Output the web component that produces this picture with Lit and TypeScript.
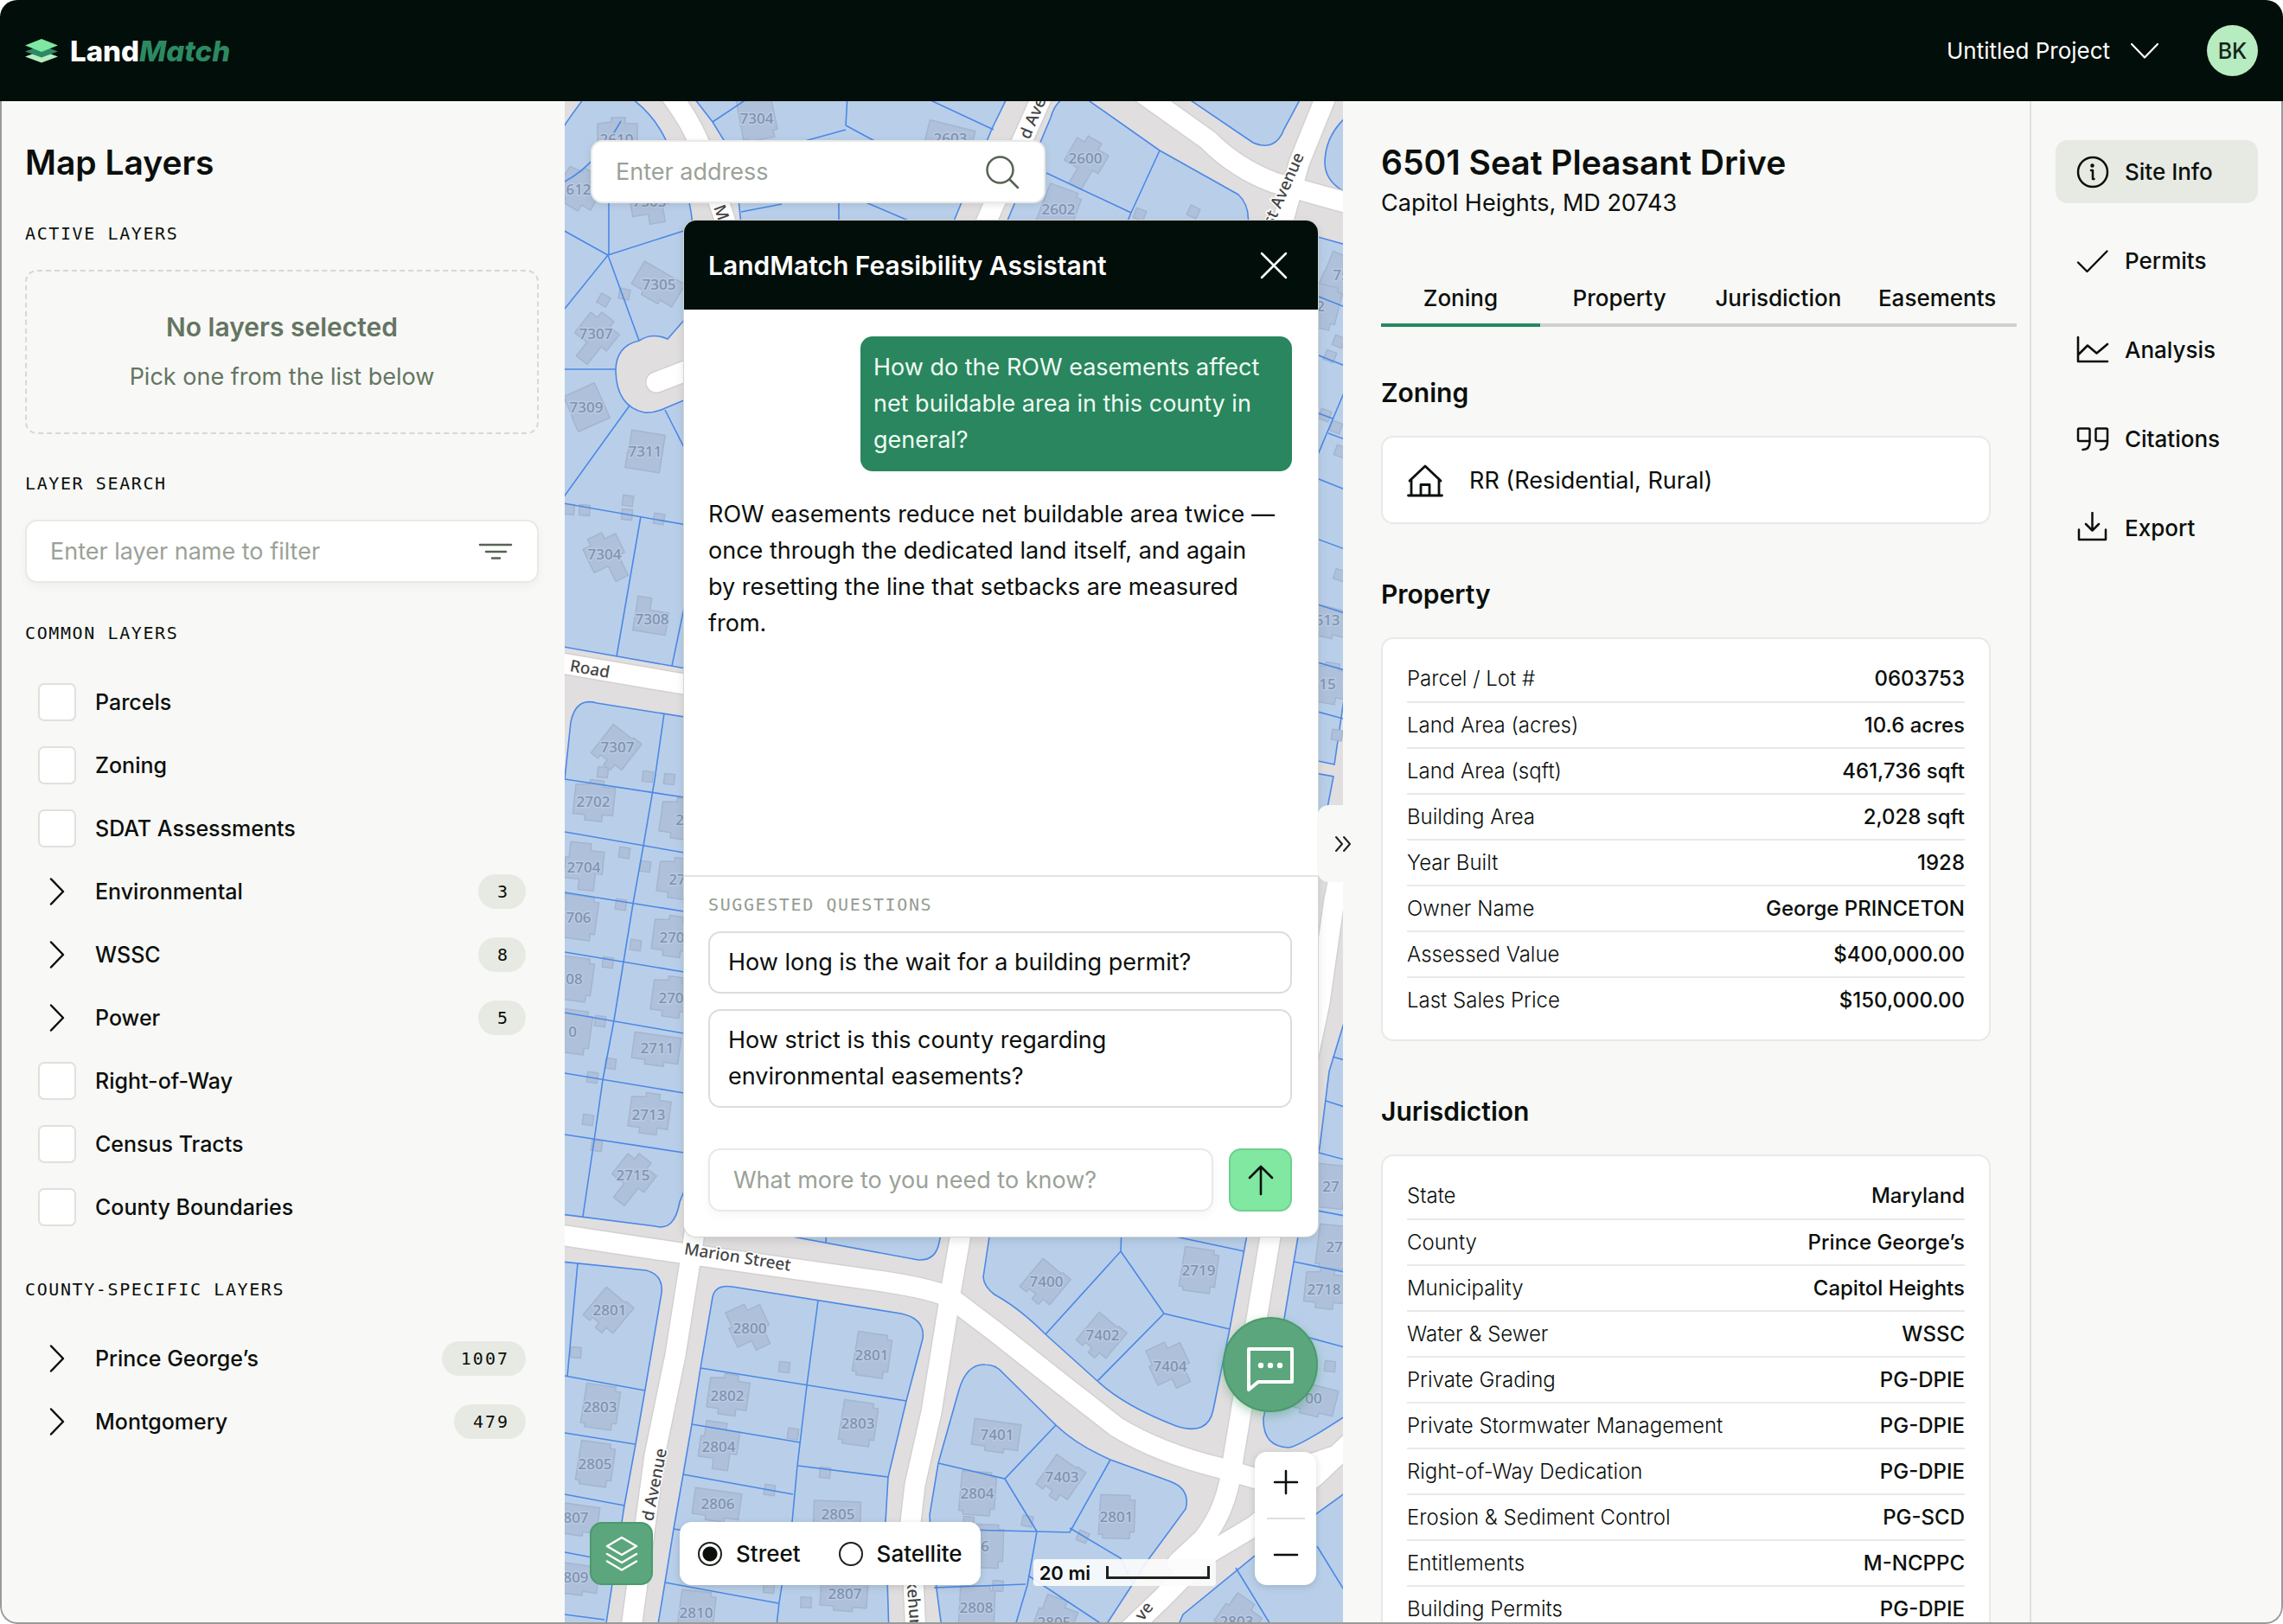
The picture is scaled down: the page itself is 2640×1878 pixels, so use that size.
import { LitElement, html, css, svg } from "lit";
import { customElement, state } from "lit/decorators.js";
import { classMap } from "lit/directives/class-map.js";

/* ---------- icons ---------- */

const icon = (w: number, h: number, body: unknown, sw = 2.5) => html`<svg
  class="icon" width=${w} height=${h} viewBox="0 0 ${w} ${h}" fill="none" stroke="currentColor"
  stroke-width=${sw} stroke-linecap="round" stroke-linejoin="round" aria-hidden="true">${body}</svg>`;

const icons = {
  logo: () => html`<svg width="38" height="28" viewBox="0 0 38 28" aria-hidden="true">
    <path d="M0 20.500 19 13.500l19 7-19 7z" fill="#b7ebc0" />
    <path d="M0 14.500 19 7.500l19 7-19 7z" fill="#2c8a63" />
    <path d="M0 7.500 19 0l19 7.500-19 7.500z" fill="#7fe8a2" />
  </svg>`,
  filter: () => icon(40, 22, svg`<path d="M2 3h36M9 11h23M16 18.500h9" />`, 2.5),
  chevronRight: () => icon(20, 34, svg`<path d="M3 2.500 17 17 3 31.500" />`, 2.5),
  chevronDown: () => icon(34, 20, svg`<path d="M2 2 17 17.500 32 2" />`, 2.2),
  search: () => icon(40, 40, svg`<circle cx="17.500" cy="17.500" r="15" /><path d="M28.500 28.500 38 38" />`, 2.5),
  close: () => icon(32, 32, svg`<path d="M2 2 30 30M30 2 2 30" />`, 2.5),
  arrowUp: () => icon(30, 36, svg`<path d="M15 34V2M2 15 15 2 28 15" />`, 2.6),
  collapse: () => icon(20, 20, svg`<path d="M2 2l7 8-7 8M11 2l7 8-7 8" />`, 2),
  chat: () => html`<svg width="56" height="54" viewBox="0 0 56 54" fill="none" aria-hidden="true">
    <path d="M3 50V3h50v38H14z" stroke="#fff" stroke-width="4" stroke-linejoin="round" />
    <circle cx="17" cy="22" r="3.200" fill="#fff" /><circle cx="28" cy="22" r="3.200" fill="#fff" />
    <circle cx="39" cy="22" r="3.200" fill="#fff" />
  </svg>`,
  layers: () => icon(38, 42, svg`<path d="M19 2 36 12 19 22 2 12zM2 21l17 10 17-10M2 29.500l17 10 17-10" />`, 2.5),
  plus: () => icon(30, 30, svg`<path d="M15 2v26M2 15h26" />`, 2.5),
  minus: () => icon(30, 30, svg`<path d="M2 15h26" />`, 2.5),
  house: () => icon(42, 38, svg`<path d="M1.500 36h39M5 36V17M37 17v19M3 19 21 2l18 17M16 36V23.500h10V36" />`, 2.8),
  info: () => icon(38, 38, svg`<circle cx="19" cy="19" r="17" /><path d="M17 17h2v10h1.500" /><circle cx="18.500" cy="11.500" r="1" fill="currentColor" />`, 2.5),
  check: () => icon(38, 38, svg`<path d="M2 20.500 12.500 31 35.500 7.500" />`, 2.4),
  chart: () => icon(38, 38, svg`<path d="M2 4v28h34M3 23.500l10-10 10.500 9L36 12" />`, 2.6),
  quote: () => icon(38, 38, svg`<path d="M15.500 21H3.500Q2 21 2 19.500V8Q2 6.500 3.500 6.500H14Q15.500 6.500 15.500 8V22Q15.500 31 7.500 31M36 21H24Q22.500 21 22.500 19.500V8Q22.500 6.500 24 6.500H34.500Q36 6.500 36 8V22Q36 31 28 31" />`, 2.5),
  download: () => icon(38, 38, svg`<path d="M18.500 1v20.500M11 14l7.500 7.500L26 14M3 20.500V32H34V20.500" />`, 2.5),
};

/* ---------- data ---------- */

type Layer = { name: string; count?: number };
const commonLayers: Layer[] = [
  { name: "Parcels" },
  { name: "Zoning" },
  { name: "SDAT Assessments" },
  { name: "Environmental", count: 3 },
  { name: "WSSC", count: 8 },
  { name: "Power", count: 5 },
  { name: "Right-of-Way" },
  { name: "Census Tracts" },
  { name: "County Boundaries" },
];
const countyLayers: Layer[] = [
  { name: "Prince George’s", count: 1007 },
  { name: "Montgomery", count: 479 },
];

const propertyRows = [
  ["Parcel / Lot #", "0603753"],
  ["Land Area (acres)", "10.6 acres"],
  ["Land Area (sqft)", "461,736 sqft"],
  ["Building Area", "2,028 sqft"],
  ["Year Built", "1928"],
  ["Owner Name", "George PRINCETON"],
  ["Assessed Value", "$400,000.00"],
  ["Last Sales Price", "$150,000.00"],
];
const jurisdictionRows = [
  ["State", "Maryland"],
  ["County", "Prince George’s"],
  ["Municipality", "Capitol Heights"],
  ["Water & Sewer", "WSSC"],
  ["Private Grading", "PG-DPIE"],
  ["Private Stormwater Management", "PG-DPIE"],
  ["Right-of-Way Dedication", "PG-DPIE"],
  ["Erosion & Sediment Control", "PG-SCD"],
  ["Entitlements", "M-NCPPC"],
  ["Building Permits", "PG-DPIE"],
];

const navItems = [
  { name: "Site Info", icon: icons.info },
  { name: "Permits", icon: icons.check },
  { name: "Analysis", icon: icons.chart },
  { name: "Citations", icon: icons.quote },
  { name: "Export", icon: icons.download },
];

/* ---------- map geometry ---------- */

const blocks = [
  "M640 165 Q655 140 678 110 H725 Q755 130 770 162 Q798 216 801 262 L800 267 V360 L772 392 Q754 384 739 394 Q712 400 712 429 Q713 470 745 477 Q757 478 769 472 L810 455 V776 L640 746Z",
  "M800 110 L824 141 L837 162 Q852 200 855 240 L858 270 H1097 L1112 234 L1147 149 L1166 110Z",
  "M1215 136 Q1220 117 1236 110 H1250 L1341 174 L1432 225 Q1446 238 1443 262 H1162Z",
  "M1368 110 L1449 165 Q1475 176 1485 149 L1506 110Z",
  "M1570 125 Q1532 150 1532 189 Q1533 216 1570 228Z",
  "M1510 270 L1570 287 V700 L1543 884 L1510 877Z",
  "M1510 892 L1542 898 L1530 960 H1510Z",
  "M653 901 L660 835 Q666 806 690 813 L810 832 V1330 L786 1390 Q780 1424 758 1418 L640 1403 V901Z",
  "M640 1458 L747 1469 Q767 1474 765 1495 L746 1607 L735 1670 L722 1741 L699 1890 H640Z",
  "M824 1500 Q827 1485 847 1488 L1042 1519 Q1070 1525 1067 1548 L1048 1620 L1027 1708 L1024 1760 L1028 1890 H759 L769 1830 L779 1768 L790 1705 L800 1647 L810 1582Z",
  "M870 1417 L916 1430 L1062 1457 Q1082 1458 1086 1437 L1090 1417Z",
  "M1146 1417 L1137 1477 Q1138 1488 1150 1497 Q1178 1512 1209 1543 L1269 1597 Q1300 1626 1360 1649 Q1397 1661 1403 1630 L1422 1537 L1444 1417Z",
  "M1109 1607 Q1118 1577 1139 1578 Q1152 1578 1160 1588 L1221 1648 Q1245 1671 1284 1688 L1353 1713 Q1377 1722 1371 1745 L1329 1802 L1309 1833 L1272 1890 H1090 L1078 1800 L1075 1752 L1085 1692Z",
  "M1570 1130 L1537 1239 L1526 1327 L1501 1430 L1485 1525 L1461 1640 Q1460 1673 1490 1674 Q1503 1673 1570 1628Z",
  "M1570 1716 L1523 1750 L1450 1800 L1368 1867 L1358 1890 H1570Z",
];

const lots = [
  "M653 357 703 295 739 394M703 295 800 264M640 260 703 295M704 225V295M640 427H712M728 469 648 580M769 474 800 535M640 580 800 608M741 597 713 759M800 660 777 770M653 210Q690 190 718 140",
  "M824 141 863 115M980 110 978 145M978 150 927 164M978 145 1015 165M1074 115 1149 150M970 230V256M857 245 904 236M1001 234 1055 257",
  "M1210 200 1308 246 1303 258M1341 174 1308 246",
  "M1520 341 1555 355M1520 409 1555 423M1520 476 1541 484M1523 528 1555 452M1536 501 1555 508M1520 552 1555 566M1520 622 1555 635M1520 698 1555 709M1520 765 1555 775M1520 822 1553 831",
  "M768 825 757 902 744 978 732 1045 710 1180 697 1249 687 1319 674 1407M653 901 791 922M653 962 791 986M653 1032 791 1054M653 1101 791 1124M653 1171 791 1195M653 1241 791 1264M653 1312 791 1333",
  "M668 1461 656 1592M653 1591 746 1608M653 1657 734 1670M653 1728 722 1741M653 1795 711 1806M653 1867 699 1873",
  "M946 1504 933 1602 922 1695 916 1760 901 1853 898 1880M810 1582 1048 1620M800 1647 925 1668M923 1695 1027 1708M790 1705 917 1728M779 1768 910 1790M769 1830 900 1854",
  "M956 1420 955 1437",
  "M1297 1420 1296 1447 1209 1543M1296 1447 1346 1519 1422 1537M1346 1519 1269 1597M1345 1427 1439 1447",
  "M1085 1692 1162 1710 1221 1648M1162 1710 1199 1771 1188 1833 1174 1880M1076 1768 1237 1772 1284 1688M1237 1767 1296 1802 1310 1832M1080 1836 1186 1832M1189 1822 1277 1880",
  "M1541 1222 1555 1226M1533 1273 1555 1280M1525 1333 1555 1341M1508 1397 1555 1406M1496 1459 1555 1471M1485 1539 1555 1558",
  "M1429 1813 1470 1880M1523 1788 1555 1840",
];

const roads = [
  "M620 762 820 796",
  "M830 415 759 442",
  "M768 100Q800 140 812 175L840 260",
  "M1210 100 1138 262",
  "M1310 100 1397 162Q1430 195 1473 211L1570 238",
  "M1538 100 1502 189 1482 262",
  "M1560 960 1543 1040 1526 1159 1469 1430 1426 1687Q1420 1745 1391 1780L1362 1807",
  "M620 1424 794 1450 1022 1482Q1075 1490 1098 1500L1151 1540 1227 1600 1291 1650Q1340 1680 1409 1697L1460 1712 1570 1675",
  "M805 1410 801 1440 781 1567 757 1683 729 1890",
  "M1114 1410 1100 1490 1077 1633 1058 1717 1053 1760 1059 1890",
  "M1570 1660 1523 1705 1450 1765 1391 1800 1344 1848 1300 1890",
];

type House = [label: string, x: number, y: number, turn: number, shape: number];
const footprints = [
  "M-19-25H15V-20H21V17H16V25H-15V21H-20Z",
  "M-22-18-6-20V-25H10V-18H24V14H12V22H-8V16H-22Z",
  "M-18-28H6V-20H22V6H14V26H-4V14H-22V-10H-18Z",
  "M-28-15H26V15H10V20H-12V15H-28Z",
  "M-19-22H20V22H-20V4H-19Z",
  "M-20-16H-10V-24H8V-16H22V8H14V34H-2V14H-20Z",
  "M-20-24H-4V-10H18V16H-20Z",
  "M-20-18H8V-20H20V18H10V26H0V19H-10V24H-20Z",
];
const houses: House[] = [
  ["7304", 875, 137, -12, 0], ["2610", 713, 161, 0, 1], ["2603", 1099, 160, 14, 3], ["612", 669, 219, 30, 1],
  ["7303", 751, 233, -10, 2], ["2600", 1255, 183, 30, 5], ["2602", 1224, 242, 20, 0], ["7305", 762, 329, 30, 3],
  ["7307", 689, 386, 38, 5], ["7309", 678, 471, -24, 4], ["7311", 746, 522, 9, 4], ["7304", 699, 641, -26, 5],
  ["7308", 754, 716, 9, 6], ["75", 1551, 318, 22, 4], ["2", 1527, 354, 14, 0], ["613", 1535, 717, 14, 3], ["15", 1535, 791, 10, 1],
  ["7307", 714, 864, 38, 7], ["2702", 686, 927, 6, 1], ["2704", 675, 1003, 6, 2], ["706", 669, 1061, 8, 0],
  ["08", 664, 1132, 8, 0], ["0", 662, 1193, 8, 0], ["2711", 760, 1212, 8, 3], ["2713", 750, 1289, 8, 1],
  ["2715", 732, 1359, 38, 5], ["2", 786, 948, 8, 1], ["27", 783, 1017, 8, 1], ["270", 777, 1084, 8, 1], ["270", 776, 1154, 8, 1],
  ["2801", 705, 1515, 40, 7], ["2800", 867, 1536, -25, 2], ["2801", 1008, 1567, 8, 0], ["2802", 841, 1614, 8, 1],
  ["2803", 992, 1646, 8, 0], ["2804", 831, 1673, 8, 2], ["2806", 830, 1739, 8, 3], ["2805", 969, 1751, 2, 3],
  ["2807", 977, 1843, 4, 3], ["2810", 805, 1865, 6, 0], ["2803", 694, 1627, 8, 0], ["2805", 688, 1693, 8, 0],
  ["807", 666, 1755, 8, 3], ["809", 666, 1824, 8, 3], ["7400", 1210, 1482, 40, 7], ["2719", 1386, 1469, 8, 0],
  ["7402", 1275, 1544, 40, 7], ["7404", 1353, 1580, -25, 2], ["7401", 1153, 1659, 8, 3], ["7403", 1228, 1708, 35, 7],
  ["2804", 1130, 1727, 4, 0], ["2801", 1291, 1754, 2, 0], ["6", 1139, 1788, 2, 0], ["2808", 1129, 1859, 2, 0],
  ["2805", 1219, 1876, 20, 2], ["2803", 1430, 1875, 35, 2], ["2718", 1531, 1491, 6, 1], ["27", 1543, 1442, 6, 0],
  ["27", 1539, 1372, 6, 0], ["00", 1519, 1617, 14, 3],
];
const sheds = [
  [722, 340, 12], [698, 347, 30], [726, 579, 8], [725, 595, 4], [658, 589, 6], [676, 590, 4], [762, 600, 8], [966, 173, 20],
  [1380, 245, 25], [1318, 248, 20], [1548, 395, 22], [1538, 412, 22], [1549, 665, 18],
  [697, 893, 6], [749, 898, 6], [774, 901, 6], [722, 986, 8], [746, 1002, 8], [718, 1046, 8], [735, 1093, 8], [703, 1113, 8],
  [694, 1181, 8], [706, 1230, 8], [685, 1246, 8], [680, 1295, 8], [690, 1325, 8], [666, 1564, 4], [907, 1581, 6], [917, 1658, 8],
  [890, 1723, 8], [954, 1703, 6], [1120, 1760, 4], [1188, 1759, 10], [1252, 1777, 22], [889, 1836, 4], [932, 1853, 2], [1154, 1834, 4],
  [1538, 1580, 6], [1532, 480, 20], [1545, 494, 20], [1550, 522, 20], [1546, 850, 8],
];

const streetNames: [string, number, number, number][] = [
  ["Road", 681, 780, 10],
  ["Marion Street", 852, 1460, 9],
  ["d Avenue", 763, 1718, -79],
  ["d Ave", 1200, 139, -67],
  ["st Avenue", 1490, 221, -66],
  ["kehurst", 1051, 1862, 86],
  ["M", 828, 248, 70],
  ["ve", 1328, 1867, -52],
];

const mapArt = () => svg`
  <rect x="600" y="60" width="1000" height="1860" fill="#e0dedf" />
  <g fill="#b9cfe9" stroke="#4c88e6" stroke-width="1.600">${blocks.map((d) => svg`<path d=${d} />`)}</g>
  <g fill="#afc1da" stroke="#a3b5cf" stroke-width="1.500" stroke-linejoin="round">
    ${sheds.map(([x, y, r]) => svg`<rect x="-6" y="-6" width="12" height="12" transform="translate(${x} ${y}) rotate(${r})" />`)}
    ${houses.map(([, x, y, turn, shape]) => svg`<path d=${footprints[shape]} transform="translate(${x} ${y}) rotate(${turn})" />`)}
  </g>
  <g fill="none" stroke="#4c88e6" stroke-width="1.600">${lots.map((d) => svg`<path d=${d} />`)}</g>
  <g fill="none" stroke="#d3d1d0" stroke-width="26" stroke-linecap="round" stroke-linejoin="round">${roads.map((d) => svg`<path d=${d} />`)}</g>
  <g fill="none" stroke="#fff" stroke-width="23" stroke-linecap="round" stroke-linejoin="round">${roads.map((d) => svg`<path d=${d} />`)}</g>
  <g class="house">${houses.map(([label, x, y]) => svg`<text x=${x} y=${y + 6}>${label}</text>`)}</g>
  <g class="street">${streetNames.map(([name, x, y, r]) => svg`<text transform="translate(${x} ${y}) rotate(${r})">${name}</text>`)}</g>
`;

/* ---------- component ---------- */

@customElement("app-root")
export class AppRoot extends LitElement {
  @state() private tab = "Zoning";
  @state() private section = "Site Info";

  static styles = css`
    :host { display: block; font-family: Inter, "Liberation Sans", sans-serif; color: #0b0f0c; }
    *, *::before, *::after { box-sizing: border-box; }
    button, input, select { font: inherit; color: inherit; margin: 0; padding: 0; border: 0; background: none; outline-offset: 2px; }
    button { cursor: pointer; }
    a { color: inherit; text-decoration: none; }
    h1, h2, h3, p, ul { margin: 0; padding: 0; }
    ul { list-style: none; }
    svg { display: block; flex: none; }

    .app { position: relative; display: grid; grid-template-rows: auto minmax(0, 1fr); height: 100vh; border-radius: 20px; overflow: hidden; background: #f8f8f6; }
    .app::after { content: ""; position: absolute; inset: 117px 0 0; border: 2px solid #999b99; border-top: 0; border-radius: 0 0 20px 20px; pointer-events: none; z-index: 5; }

    .topbar { display: flex; align-items: center; justify-content: space-between; height: 117px; padding: 0 29px; background: #020e09; color: #fff; }
    .brand { display: flex; align-items: center; gap: 14px; font-size: 33px; font-weight: 800; line-height: 40px; }
    .brand em { color: #2c8a63; }
    .account { display: flex; align-items: center; gap: 55px; font-size: 26px; }
    .project { display: grid; align-items: center; }
    .project > * { grid-area: 1 / 1; }
    .project svg { justify-self: end; pointer-events: none; }
    .project select { appearance: none; height: 48px; padding-right: 56px; color: #fff; }
    .project option { color: #0b0f0c; }
    .avatar { width: 59px; height: 59px; border-radius: 50%; background: #b7ebc0; color: #14251a; font-size: 25px; font-weight: 500; }

    .body { display: grid; grid-template-columns: 653px minmax(0, 1fr) 794px 293px; min-height: 0; }

    .title { font-size: 39px; font-weight: 600; line-height: 48px; }
    .caps { font-family: "DejaVu Sans Mono", monospace; font-size: 20px; font-weight: 400; line-height: 24px; letter-spacing: 0.08em; text-transform: uppercase; }
    .field { display: flex; align-items: center; height: 73px; padding: 0 28px 0 27px; border: 2px solid #e9eae7; border-radius: 14px; background: #fff; box-shadow: 0 4px 12px rgba(0, 0, 0, 0.04); color: #566353; }
    .field input { flex: 1; min-width: 0; height: 100%; color: #0b0f0c; font-size: 27px; }
    .field input::placeholder { color: #9aa297; opacity: 1; }

    .sidebar { padding: 47px 30px 0 29px; overflow: hidden; }
    .sidebar .title { margin-bottom: 46px; }
    .sidebar .caps { margin-bottom: 30px; }
    .empty { display: grid; gap: 21px; height: 190px; padding: 46px 16px; margin-bottom: 45px; border: 2px dashed #d6d9d4; border-radius: 14px; text-align: center; line-height: 36px; color: #647562; }
    .empty strong { font-size: 30px; font-weight: 600; }
    .empty p { font-size: 27px; }
    .sidebar .field { margin-bottom: 46px; }
    .list { display: grid; gap: 29px; padding: 16px 15px 0; margin-bottom: 61px; font-size: 25px; font-weight: 500; }
    .layer { display: flex; align-items: center; width: 100%; height: 44px; gap: 22px; text-align: left; cursor: pointer; }
    .layer .name { flex: 1; font-weight: 500; }
    .layer .twist { display: grid; place-items: center; width: 44px; }
    .layer input { appearance: none; width: 44px; height: 44px; border: 2px solid #dfe1dd; border-radius: 7px; background: #fff; cursor: pointer; }
    .layer input:checked { background: #29865f; }
    .badge { height: 40px; padding: 0 19px 0 22px; border-radius: 20px; background: #e7eae3; font-family: "DejaVu Sans Mono", monospace; font-size: 20px; font-weight: 400; line-height: 40px; letter-spacing: 0.1em; }

    .map { position: relative; overflow: hidden; background: #e0dedf; }
    .art { position: absolute; inset: 0; width: 100%; height: 100%; }
    .house { font: 500 17px "Noto Sans", sans-serif; fill: #7f92b1; text-anchor: middle; paint-order: stroke; stroke: #b9cae2; stroke-width: 3px; }
    .street { font: 500 19px "Noto Sans", sans-serif; fill: #444; text-anchor: middle; paint-order: stroke; stroke: #fff; stroke-width: 3px; }
    .address { position: absolute; left: 30px; top: 45px; width: 526px; box-shadow: 0 2px 8px rgba(0, 0, 0, 0.1); }

    .chat { position: absolute; right: 29px; top: 138px; display: flex; flex-direction: column; width: 733px; height: 1175px; border-radius: 14px; overflow: hidden; background: #fff; box-shadow: 0 0 0 1px #d3d6d3, 0 4px 12px rgba(0, 0, 0, 0.12); font-size: 27px; line-height: 42px; }
    .chat header { display: flex; align-items: center; justify-content: space-between; height: 103px; padding: 0 35px 0 28px; background: #020e09; color: #fff; }
    .chat h2 { font-size: 30px; font-weight: 600; }
    .thread { flex: 1; display: flex; flex-direction: column; gap: 29px; padding: 31px 30px 31px 28px; }
    .ask { align-self: flex-end; width: 499px; padding: 15px; border-radius: 14px; background: #29865f; color: #effbf2; }
    .suggest { display: flex; flex-direction: column; gap: 18px; padding: 20px 30px 0 28px; border-top: 2px solid #e3e5e2; }
    .suggest .caps { margin-bottom: 1px; color: #949c91; }
    .suggest button { padding: 13px 21px; border: 2px solid #dcdedb; border-radius: 14px; text-align: left; line-height: 42px; }
    .compose { display: flex; gap: 18px; padding: 47px 30px 29px 28px; }
    .compose .field { flex: 1; }
    .send { display: grid; place-items: center; width: 73px; height: 73px; border: 2px solid #6fcf90; border-radius: 14px; background: #80e8a1; }

    .fab { position: absolute; right: 29px; bottom: 245px; display: grid; place-items: center; width: 110px; height: 110px; padding-top: 12px; border: 2px solid #4b9a6d; border-radius: 50%; background: #5ba67c; box-shadow: 0 4px 12px rgba(60, 150, 90, 0.4); }
    .zoom { position: absolute; right: 31px; bottom: 45px; display: flex; flex-direction: column; align-items: center; width: 71px; border-radius: 14px; background: #fff; box-shadow: 0 2px 8px rgba(0, 0, 0, 0.15); }
    .zoom button { display: grid; place-items: center; width: 100%; height: 76px; }
    .zoom button:first-child { padding-bottom: 6px; }
    .zoom button:last-child { padding-top: 6px; }
    .zoom hr { width: 44px; height: 2px; margin: 0; border: 0; background: #dcdedb; }
    .basemap { position: absolute; left: 29px; bottom: 45px; display: flex; gap: 31px; }
    .basemap button { display: grid; place-items: center; width: 73px; height: 73px; border: 2px solid #4b9a6d; border-radius: 14px; background: #5ba67c; color: #fff; }
    .basemap fieldset { display: flex; align-items: center; gap: 44px; height: 73px; margin: 0; padding: 0 21px; border: 0; border-radius: 14px; background: #fff; box-shadow: 0 2px 8px rgba(0, 0, 0, 0.15); font-size: 26px; font-weight: 500; }
    .basemap label { display: flex; align-items: center; gap: 16px; cursor: pointer; }
    .basemap input { appearance: none; width: 28px; height: 28px; border: 2px solid #1c221d; border-radius: 50%; background: #fff; }
    .basemap input:checked { background: radial-gradient(circle, #0b0f0c 0 8px, #fff 9px); }
    .scale { position: absolute; right: 147px; bottom: 44px; display: flex; align-items: center; gap: 18px; height: 31px; padding: 0 7px; border-radius: 4px; background: rgba(252, 252, 252, 0.9); font-size: 22px; font-weight: 600; }
    .scale i { width: 120px; height: 15px; border: 3px solid #1c221d; border-top: 0; }

    .details { position: relative; min-height: 0; background: #f8f8f6; }
    .scroll { height: 100%; padding: 47px 15px 0 44px; overflow-y: auto; scrollbar-width: none; }
    .place { font-size: 27px; line-height: 38px; margin: 4px 0 60px; }
    .tabs { display: grid; grid-template-columns: repeat(4, 1fr); margin-bottom: 56px; }
    .tabs button { height: 64px; border-bottom: 4px solid #cfd1ce; font-size: 26px; font-weight: 500; }
    .tabs button.on { border-color: #29865f; }
    .details h3 { font-size: 30px; font-weight: 600; line-height: 40px; margin-bottom: 30px; }
    .card { margin: 0 30px 61px 0; padding: 20px 28px 19px; border: 2px solid #e9eae7; border-radius: 14px; background: #fff; }
    .zone { display: flex; align-items: center; gap: 30px; height: 102px; font-size: 27px; }
    table { width: 100%; border-collapse: collapse; font-size: 24px; }
    tr { height: 53px; }
    tr + tr { border-top: 2px solid #e9eae7; }
    th, td { padding: 0; line-height: 30px; }
    th { font-weight: 300; text-align: left; }
    td { font-weight: 500; text-align: right; }
    .collapse { position: absolute; left: -30px; top: 814px; display: grid; place-items: center; width: 60px; height: 89px; border-radius: 14px; background: #f8f8f6; color: #1c221d; z-index: 1; }

    .rail { display: flex; flex-direction: column; gap: 30px; padding: 45px 29px 0 28px; border-left: 2px solid #e0e2df; font-size: 26px; font-weight: 500; }
    .rail a { display: flex; align-items: center; gap: 18px; height: 73px; padding: 0 24px; border-radius: 14px; }
    .rail a.on { background: #e7eae3; }
  `;

  private layerRow(layer: Layer) {
    return layer.count === undefined
      ? html`<li><label class="layer"><input type="checkbox" /><span class="name">${layer.name}</span></label></li>`
      : html`<li><button class="layer" aria-expanded="false">
          <span class="twist">${icons.chevronRight()}</span><span class="name">${layer.name}</span><span class="badge">${layer.count}</span>
        </button></li>`;
  }

  private table(rows: string[][]) {
    return html`<table class="facts"><tbody>
      ${rows.map(([name, value]) => html`<tr><th scope="row">${name}</th><td>${value}</td></tr>`)}
    </tbody></table>`;
  }

  render() {
    return html`<div class="app">
      <header class="topbar">
        <a class="brand" href="#">${icons.logo()}<span>Land<em>Match</em></span></a>
        <div class="account">
          <div class="project">
            <select aria-label="Project"><option>Untitled Project</option></select>
            ${icons.chevronDown()}
          </div>
          <button class="avatar">BK</button>
        </div>
      </header>
      <div class="body">
        <aside class="sidebar">
          <h1 class="title">Map Layers</h1>
          <h2 class="caps">Active Layers</h2>
          <div class="empty"><strong>No layers selected</strong><p>Pick one from the list below</p></div>
          <h2 class="caps">Layer Search</h2>
          <div class="field">
            <input type="text" aria-label="Layer Search" placeholder="Enter layer name to filter" />${icons.filter()}
          </div>
          <h2 class="caps">Common Layers</h2>
          <ul class="list">${commonLayers.map((l) => this.layerRow(l))}</ul>
          <h2 class="caps">County-Specific Layers</h2>
          <ul class="list">${countyLayers.map((l) => this.layerRow(l))}</ul>
        </aside>

        <main class="map">
          <svg class="art" viewBox="653 117 900 1761" preserveAspectRatio="xMidYMid slice" aria-hidden="true">${mapArt()}</svg>
          <div class="field address">
            <input type="search" aria-label="Address" placeholder="Enter address" />${icons.search()}
          </div>
          <section class="chat">
            <header><h2>LandMatch Feasibility Assistant</h2><button aria-label="Close">${icons.close()}</button></header>
            <div class="thread">
              <p class="ask">How do the ROW easements affect net buildable area in this county in general?</p>
              <p>ROW easements reduce net buildable area twice — once through the dedicated land itself, and again<br />by resetting the line that setbacks are measured<br />from.</p>
            </div>
            <div class="suggest">
              <h3 class="caps">Suggested Questions</h3>
              <button>How long is the wait for a building permit?</button>
              <button>How strict is this county regarding<br />environmental easements?</button>
            </div>
            <form class="compose" @submit=${(e: Event) => e.preventDefault()}>
              <div class="field"><input type="text" aria-label="Question" placeholder="What more to you need to know?" /></div>
              <button class="send" aria-label="Send">${icons.arrowUp()}</button>
            </form>
          </section>
          <button class="fab" aria-label="Assistant">${icons.chat()}</button>
          <div class="zoom">
            <button aria-label="Zoom in">${icons.plus()}</button><hr /><button aria-label="Zoom out">${icons.minus()}</button>
          </div>
          <div class="basemap">
            <button aria-label="Layers">${icons.layers()}</button>
            <fieldset aria-label="Base map">
              <label><input type="radio" name="base" checked />Street</label>
              <label><input type="radio" name="base" />Satellite</label>
            </fieldset>
          </div>
          <div class="scale">20 mi<i></i></div>
        </main>

        <section class="details">
          <button class="collapse" aria-label="Collapse panel">${icons.collapse()}</button>
          <div class="scroll">
            <h2 class="title">6501 Seat Pleasant Drive</h2>
            <p class="place">Capitol Heights, MD 20743</p>
            <div class="tabs" role="tablist">
              ${["Zoning", "Property", "Jurisdiction", "Easements"].map(
                (t) => html`<button role="tab" aria-selected=${this.tab === t} class=${classMap({ on: this.tab === t })}
                  @click=${() => (this.tab = t)}>${t}</button>`
              )}
            </div>
            <h3>Zoning</h3>
            <div class="card zone">${icons.house()}RR (Residential, Rural)</div>
            <h3>Property</h3>
            <div class="card">${this.table(propertyRows)}</div>
            <h3>Jurisdiction</h3>
            <div class="card">${this.table(jurisdictionRows)}</div>
          </div>
        </section>

        <nav class="rail">
          ${navItems.map(
            (n) => html`<a href="#" class=${classMap({ on: this.section === n.name })}
              @click=${() => (this.section = n.name)}>${n.icon()}${n.name}</a>`
          )}
        </nav>
      </div>
    </div>`;
  }
}
